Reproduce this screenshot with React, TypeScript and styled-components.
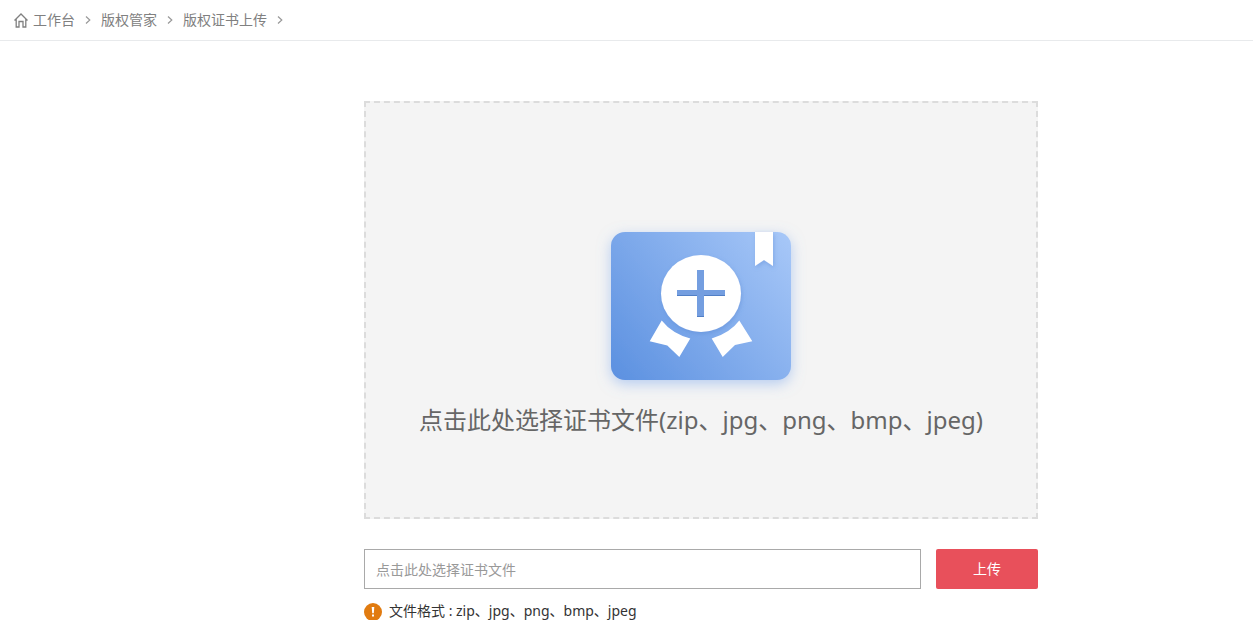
import React, { useRef, useState } from "react";
import styled, { createGlobalStyle } from "styled-components";

const GlobalStyle = createGlobalStyle`
  * { box-sizing: border-box; }
  body {
    margin: 0;
    background: #fff;
    color: #333;
    font: 14px/20px "Noto Sans", "Noto Sans CJK SC", sans-serif;
  }
`;

const Breadcrumb = styled.nav`
  display: flex;
  align-items: center;
  height: 41px;
  padding: 0 14px;
  border-bottom: 1px solid #e8eaec;
`;

const Crumb = styled.a`
  display: flex;
  align-items: center;
  gap: 5px;
  color: #808080;
  text-decoration: none;
`;

const Separator = styled.svg`
  width: 6px;
  height: 8px;
  margin: 0 10px;
  fill: none;
  stroke: #999;
`;

const Main = styled.main`
  padding: 60px 0 0 149px;
`;

const Form = styled.form`
  width: 100%;
  max-width: 674px;
  margin: 0 auto;
`;

const DropZone = styled.button`
  display: flex;
  flex-direction: column;
  align-items: center;
  width: 100%;
  height: 418px;
  padding: 112px 0 0;
  border: 2px dashed #dcdcdc;
  background: #f4f4f4;
  color: #666;
  font: inherit;
  font-size: 24px;
  line-height: 36px;
  cursor: pointer;
`;

const Certificate = styled.svg`
  flex: none;
  width: 220px;
  height: 187px;
`;

const Row = styled.div`
  display: flex;
  gap: 15px;
  margin-top: 30px;
`;

const FileName = styled.input`
  flex: 1;
  min-width: 0;
  height: 40px;
  padding: 0 11px;
  border: 1px solid #a9a9a9;
  background: #fff;
  font: inherit;
  &::placeholder { color: #999; opacity: 1; }
`;

const Submit = styled.button`
  width: 102px;
  height: 40px;
  padding: 0;
  border: 0;
  border-radius: 2px;
  background: #e8505b;
  color: #fff;
  font: inherit;
  cursor: pointer;
`;

const Hint = styled.p`
  display: flex;
  align-items: center;
  gap: 7px;
  margin: 12px 0 0;
`;

function HomeIcon() {
  return (
    <svg width="14" height="15" viewBox="0 0 14 15" fill="none" stroke="#808080" strokeWidth="1.3" aria-hidden="true">
      <path d="M.5 7.500 7 1l6.500 6.500M2.200 6v8H5V8.500h4V14h2.800V6" />
    </svg>
  );
}

function Chevron() {
  return (
    <Separator viewBox="0 0 6 8" aria-hidden="true">
      <path d="M1 .5 4.800 4 1 7.500" strokeWidth="1.200" />
    </Separator>
  );
}

function CertificateIcon() {
  return (
    <Certificate viewBox="1 0 220 187" aria-hidden="true">
      <defs>
        <linearGradient id="card" x1="21" y1="165" x2="201" y2="17" gradientUnits="userSpaceOnUse">
          <stop offset="0" stopColor="#5b90e0" />
          <stop offset="1" stopColor="#a8c8f8" />
        </linearGradient>
        <filter id="glow" x="-20%" y="-20%" width="140%" height="150%">
          <feDropShadow dx="0" dy="4" stdDeviation="7" floodColor="#76a3ec" floodOpacity=".5" />
        </filter>
        <filter id="lift" x="-20%" y="-20%" width="150%" height="150%">
          <feDropShadow dx="1" dy="2" stdDeviation="2" floodColor="#4c7ecb" floodOpacity=".35" />
        </filter>
      </defs>
      <rect x="21" y="17" width="180" height="148" rx="14" fill="url(#card)" filter="url(#glow)" />
      <path d="M165 17h18v34l-9-6-9 6z" fill="#fff" filter="url(#lift)" />
      <ellipse cx="111" cy="78.500" rx="40" ry="38.500" fill="#fff" filter="url(#lift)" />
      <path d="M71.700 105.500Q82 118.500 100.300 123.500L89.300 142 77.300 130.500 59.700 126.200z" fill="#fff" />
      <path d="M149.300 105.500Q140 118 121.700 123.500L132.700 142 145 130 162.300 126.200z" fill="#fff" />
      <path d="M107 55h7v20h21v6h-21v21h-7V81H87v-6h20z" fill="#749ee0" />
      <path d="M87 80.500h20M114 80.500h21M107 101.500h7" stroke="#517fc6" />
    </Certificate>
  );
}

function NoticeIcon() {
  return (
    <svg width="18" height="17" viewBox="0 0 18 17" aria-hidden="true">
      <circle cx="9" cy="9" r="9" fill="#e17b10" />
      <path d="M7.700 4h2.600l-.5 6.300H8.200z" fill="#fff" />
      <rect x="8" y="11.500" width="2" height="2" fill="#fff" />
    </svg>
  );
}

export default function App() {
  const picker = useRef<HTMLInputElement>(null);
  const [name, setName] = useState("");
  const choose = () => picker.current?.click();

  return (
    <>
      <GlobalStyle />
      <Breadcrumb>
        <Crumb href="#"><HomeIcon />工作台</Crumb>
        <Chevron />
        <Crumb href="#">版权管家</Crumb>
        <Chevron />
        <Crumb href="#">版权证书上传</Crumb>
        <Chevron />
      </Breadcrumb>
      <Main>
        <Form onSubmit={(e) => e.preventDefault()}>
          <input
            ref={picker}
            type="file"
            hidden
            accept=".zip,.jpg,.png,.bmp,.jpeg"
            onChange={(e) => setName(e.target.files?.[0]?.name ?? "")}
          />
          <DropZone type="button" onClick={choose}>
            <CertificateIcon />
            <span>点击此处选择证书文件(zip、jpg、png、bmp、jpeg)</span>
          </DropZone>
          <Row>
            <FileName
              type="text"
              readOnly
              value={name}
              onClick={choose}
              placeholder="点击此处选择证书文件"
              aria-label="证书文件"
            />
            <Submit type="submit">上传</Submit>
          </Row>
          <Hint><NoticeIcon />文件格式 : zip、jpg、png、bmp、jpeg</Hint>
        </Form>
      </Main>
    </>
  );
}
